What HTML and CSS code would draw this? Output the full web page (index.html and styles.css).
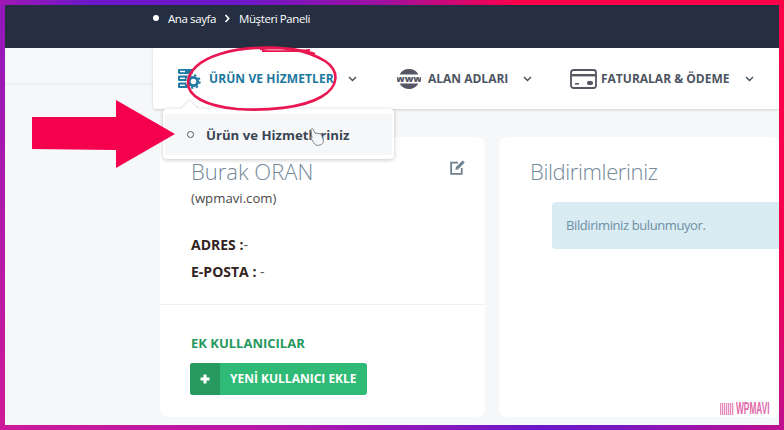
FILE: index.html
```html
<!DOCTYPE html>
<html lang="tr">
<head>
    <meta charset="UTF-8">
    <meta name="viewport" content="width=device-width, initial-scale=1.0">
    <title>Müşteri Paneli</title>
    <link rel="stylesheet" href="styles.css">
</head>
<body>
    <div class="page">

        <header class="top-header">
            <span class="crumb-dot"></span>
            <span>Ana sayfa</span>
            <svg class="crumb-sep" width="7" height="9" viewBox="0 0 7 9"><path d="M1.5 1l3.2 3.5L1.5 8" fill="none" stroke="#fff" stroke-width="1.7"/></svg>
            <span>Müşteri Paneli</span>
        </header>

        <div class="nav-row">
            <div class="side-strip"></div>
            <nav class="main-nav">
                <a class="nav-item nav-active">
                    <svg class="nav-icon" width="23" height="20" viewBox="0 0 23 20">
                        <g fill="#1f7ba6">
                            <rect x="0" y="0" width="15" height="5" rx="1.2"/>
                            <rect x="0" y="6.5" width="12" height="5.5" rx="1.2"/>
                            <rect x="0" y="13.5" width="10" height="5.5" rx="1.2"/>
                        </g>
                        <g fill="#fff">
                            <rect x="2" y="1.8" width="5" height="1.4"/>
                            <rect x="2" y="8.6" width="5" height="1.4"/>
                            <rect x="2" y="15.6" width="5" height="1.4"/>
                        </g>
                        <circle cx="15.5" cy="12.5" r="7.6" fill="#fff"/>
                        <circle cx="15.5" cy="12.5" r="4.2" fill="none" stroke="#1f7ba6" stroke-width="2.8"/>
                        <circle cx="15.5" cy="12.5" r="6.4" fill="none" stroke="#1f7ba6" stroke-width="1.6" stroke-dasharray="2.4 2.6"/>
                    </svg>
                    <span>ÜRÜN VE HİZMETLER</span>
                    <svg class="chev" width="9" height="6" viewBox="0 0 9 6"><path d="M1 1l3.5 3.5L8 1" fill="none" stroke="#444d5a" stroke-width="1.4"/></svg>
                </a>
                <a class="nav-item nav-www">
                    <svg class="nav-icon" width="24" height="24" viewBox="0 0 24 24">
                        <path d="M2.6 7.6a10.8 10.8 0 0 1 18.8 0zM2.6 16.4a10.8 10.8 0 0 0 18.8 0z" fill="#555563"/>
                        <text x="12" y="14.8" text-anchor="middle" class="www-text">www</text>
                    </svg>
                    <span>ALAN ADLARI</span>
                    <svg class="chev" width="9" height="6" viewBox="0 0 9 6"><path d="M1 1l3.5 3.5L8 1" fill="none" stroke="#444d5a" stroke-width="1.4"/></svg>
                </a>
                <a class="nav-item nav-card">
                    <svg class="nav-icon" width="27" height="20" viewBox="0 0 27 20">
                        <rect x="1" y="1" width="25" height="18" rx="2.5" fill="none" stroke="#555563" stroke-width="1.8"/>
                        <rect x="1" y="5" width="25" height="2.4" fill="#555563"/>
                        <rect x="5" y="14" width="4" height="1.6" fill="#555563"/>
                        <rect x="17" y="12" width="6" height="4" rx="1.8" fill="#555563"/>
                    </svg>
                    <span>FATURALAR &amp; ÖDEME</span>
                    <svg class="chev" width="9" height="6" viewBox="0 0 9 6"><path d="M1 1l3.5 3.5L8 1" fill="none" stroke="#444d5a" stroke-width="1.4"/></svg>
                </a>
            </nav>
        </div>

        <main class="content">
            <section class="card card-user">
                <div class="user-info">
                    <svg class="edit-icon" width="17" height="17" viewBox="0 0 16 16">
                        <path d="M12 8.5V14H2V3.5h6.5" fill="none" stroke="#6f808e" stroke-width="1.7"/>
                        <path d="M6 10.3l.6-2.7L12.8 1.4l2 2-6.2 6.3z" fill="#6f808e"/>
                    </svg>
                    <h2 class="card-title">Burak ORAN</h2>
                    <p class="company">(wpmavi.com)</p>
                    <p class="info-line info-first"><b>ADRES :</b>-</p>
                    <p class="info-line"><b>E-POSTA :</b> -</p>
                </div>
                <div class="extra-users">
                    <h3>EK KULLANICILAR</h3>
                    <a class="add-btn">
                        <span class="add-plus">
                            <svg width="10" height="10" viewBox="0 0 10 10"><path d="M5 .5v9M.5 5h9" stroke="#fff" stroke-width="3"/></svg>
                        </span>
                        <span class="add-label">YENİ KULLANICI EKLE</span>
                    </a>
                </div>
            </section>
            <section class="card card-notes">
                <h2 class="card-title title-notes">Bildirimleriniz</h2>
                <div class="alert">Bildiriminiz bulunmuyor.</div>
            </section>
        </main>

        <!-- acilir menu -->
        <div class="dropdown">
            <span class="dropdown-caret"></span>
            <div class="dropdown-item">
                <span class="ring"></span>
                <span>Ürün ve Hizmetleriniz</span>
            </div>
        </div>

        <!-- ustteki isaretler: elips, ok, imlec -->
        <svg class="marks" width="774" height="420" viewBox="0 0 774 420">
            <path d="M27 112H111V95L170 129L111 163V145L27 144z" fill="#f5004f"/>
            <path d="M310 49C280 40 240 41 215 49C195 55 183 66 183 78C183 91 200 101 232 104C262 106 297 103 316 92C334 82 335 66 320 56C300 44 275 41 255 44" fill="none" stroke="#ea1650" stroke-width="2.6"/>
            <path d="M257 46C270 46 290 47 305 45" fill="none" stroke="#ea1650" stroke-width="1.8"/>
            <path d="M306 125l1 8-2-1 4 6c1 2 3 3 6 2 3-1 4-3 3-6l-2-5-6-1-2-4c-1-1-2 0-2 1z" fill="#f4f5f7" stroke="#888" stroke-width="1"/>
        </svg>

        <div class="watermark">
            <span class="watermark-bars"></span>
            <span class="watermark-text">WPMAVI</span>
        </div>
    </div>
</body>
</html>
```

FILE: styles.css
```css
/* Cerceve body'nin arka plani, sayfa 5px iceride */
body {
    margin: 0;
    width: 784px;
    height: 430px;
    box-sizing: border-box;
    padding: 5px;
    overflow: hidden;
    font-family: "Open Sans", "Noto Sans", sans-serif;
    background-color: #a018b0;
    background-image:
        linear-gradient(90deg, #a018b4 0, #6c18c8 90px, #6c18c8 240px, #a010a0 385px, #ff0048 520px, #ff0048 784px),
        linear-gradient(90deg, #cc1a9a 0, #b818a8 250px, #6c18c8 540px, #7a18c0 620px, #c01090 784px),
        linear-gradient(180deg, #9018bc 0, #d01a98 430px),
        linear-gradient(180deg, #ff0048 0, #f5004f 270px, #c01090 430px);
    background-size: 100% 5px, 100% 5px, 5px 100%, 5px 100%;
    background-position: 0 0, 0 100%, 0 0, 100% 0;
    background-repeat: no-repeat;
}

.page {
    position: relative;
    width: 774px;
    height: 420px;
    overflow: hidden;
    background-color: #f5f7f9;
}

/* Koyu ust bant */
.top-header {
    height: 43px;
    box-sizing: border-box;
    padding: 5px 0 0 148px;
    display: flex;
    align-items: flex-start;
    background-color: #262f41;
    color: #fff;
    font-size: 11.5px;
    letter-spacing: -0.4px;
    line-height: 17px;
}
.crumb-dot {
    width: 6px;
    height: 6px;
    margin: 5px 9px 0 0;
    border-radius: 50%;
    background-color: #fff;
}
.crumb-sep {
    margin: 4px 8px 0 8px;
}

/* Menu */
.nav-row {
    display: flex;
    align-items: flex-start;
}
.side-strip {
    width: 148px;
    height: 35px;
    background-color: #f7f8fa;
    box-shadow: 0 1px 2px rgba(0,0,0,0.08);
}
.main-nav {
    flex: 1;
    height: 61px;
    display: flex;
    align-items: center;
    position: relative;
    background-color: #fff;
    border-bottom-left-radius: 4px;
    box-shadow: 0 1px 3px rgba(0,0,0,0.16);
    font-size: 12px;
    font-weight: 700;
    color: #4d5461;
}
.nav-item {
    display: flex;
    align-items: center;
}
.nav-active {
    width: 219px;
    padding-left: 25px;
    box-sizing: content-box;
    color: #1a779f;
    letter-spacing: 0.1px;
}
.nav-active span {
    margin-left: 8px;
}
.nav-active .chev {
    margin-left: 14px;
}
.nav-www {
    width: 173px;
}
.nav-www span {
    margin-left: 7px;
}
.nav-www .chev {
    margin-left: 15px;
}
.nav-card span {
    margin-left: 4px;
}
.nav-card .chev {
    margin-left: 15px;
}
.www-text {
    font-family: "Open Sans", sans-serif;
    font-size: 9.5px;
    font-weight: 800;
    fill: #555563;
}

/* Kartlar */
.content {
    display: flex;
    gap: 14px;
    height: 280px;
    margin-top: 28px;
    padding-left: 155px;
}
.card {
    background-color: #fff;
    border-radius: 8px;
    position: relative;
    box-sizing: border-box;
}
.card-user {
    width: 325px;
}
.card-notes {
    flex: 1;
    min-width: 0;
    padding: 19px 0 0 31px;
}
.card-title {
    margin: 0;
    font-size: 22px;
    font-weight: 300;
    line-height: 30px;
    color: #748999;
}
.title-notes {
    letter-spacing: -0.4px;
}
.user-info {
    height: 168px;
    box-sizing: border-box;
    padding: 19px 0 0 31px;
    border-bottom: 1px solid #f0f1f3;
    position: relative;
}
.edit-icon {
    position: absolute;
    top: 22px;
    right: 19px;
}
.company {
    margin: 2px 0 0;
    font-size: 13.2px;
    line-height: 20px;
    color: #4a4a4a;
}
.info-line {
    margin: 9px 0 0;
    font-size: 14px;
    line-height: 18px;
    color: #5a5a5a;
}
.info-line b {
    color: #33241f;
}
.info-first {
    margin-top: 28px;
}
.extra-users {
    padding: 28px 0 0 30px;
}
.extra-users h3 {
    margin: 0 0 10px 1px;
    font-size: 13px;
    line-height: 20px;
    font-weight: 700;
    color: #259860;
}
.add-btn {
    display: flex;
    width: 177px;
    height: 32px;
    border-radius: 3px;
    overflow: hidden;
    background-color: #2fba75;
    color: #fff;
    font-size: 12px;
    font-weight: 700;
    line-height: 32px;
}
.add-plus {
    width: 30px;
    display: flex;
    align-items: center;
    justify-content: center;
    background-color: #279a5f;
}
.add-label {
    margin-left: 10px;
}
.alert {
    width: 300px;
    height: 47px;
    margin: 16px 0 0 22px;
    padding-left: 14px;
    border-radius: 4px 0 0 4px;
    background-color: #d9ebf3;
    color: #6f8fa3;
    font-size: 13px;
    letter-spacing: -0.4px;
    line-height: 47px;
}

/* Acilir menu */
.dropdown {
    position: absolute;
    left: 158px;
    top: 104px;
    width: 231px;
    height: 50px;
    box-sizing: border-box;
    padding: 5px 2px 4px;
    background-color: #fff;
    border-radius: 4px;
    box-shadow: 0 1px 4px rgba(0,0,0,0.22);
}
.dropdown-caret {
    position: absolute;
    left: 20px;
    top: -6px;
    width: 13px;
    height: 13px;
    background-color: #fff;
    transform: rotate(45deg);
    box-shadow: -1px -1px 1px rgba(0,0,0,0.1);
}
.dropdown-item {
    position: relative;
    height: 41px;
    display: flex;
    align-items: center;
    padding-left: 22px;
    background-color: #f5f7f9;
    font-size: 13.2px;
    font-weight: 700;
    color: #3a4554;
}
.ring {
    width: 5px;
    height: 5px;
    margin-right: 12px;
    border: 1px solid #555;
    border-radius: 50%;
}

.marks {
    position: absolute;
    left: 0;
    top: 0;
    pointer-events: none;
}

.watermark {
    position: absolute;
    right: 9px;
    bottom: 10px;
    display: flex;
    align-items: center;
    height: 12px;
    gap: 2px;
}
.watermark-bars {
    width: 14px;
    height: 12px;
    background-image: repeating-linear-gradient(90deg, #e58cc0 0, #e58cc0 1px, #f7dcea 1px, #f7dcea 2px);
}
.watermark-text {
    width: 34px;
    font-family: "Liberation Sans", sans-serif;
    font-size: 16px;
    font-weight: 700;
    line-height: 12px;
    color: #e068aa;
    transform: scaleX(0.52);
    transform-origin: left center;
    white-space: nowrap;
}
```
